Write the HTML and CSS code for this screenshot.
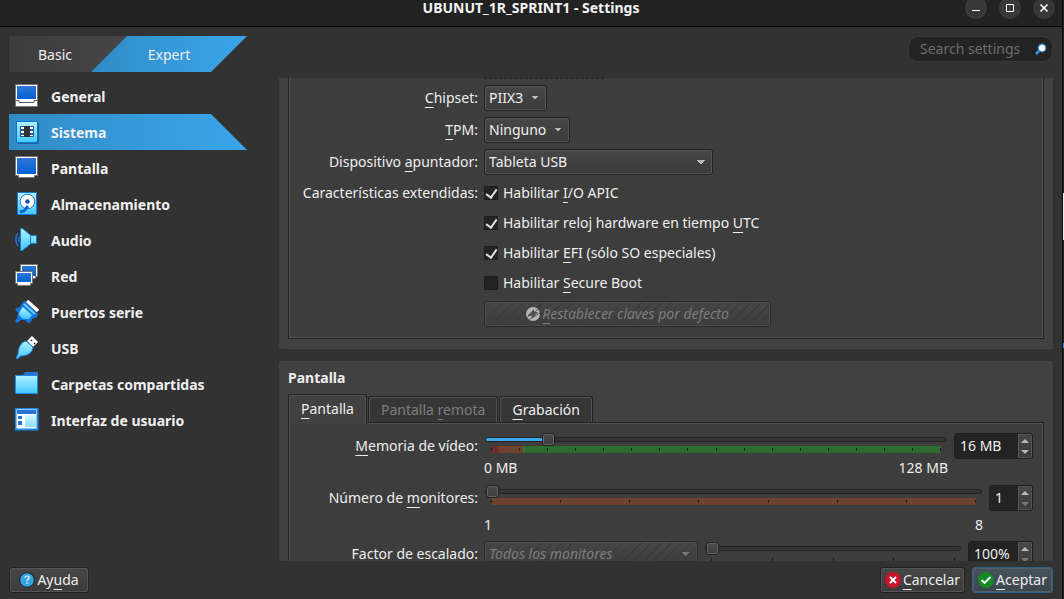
FILE: index.html
```html
<!DOCTYPE html>
<html lang="es">
<head>
<meta charset="utf-8">
<meta name="viewport" content="width=device-width, initial-scale=1">
<title>UBUNUT_1R_SPRINT1 - Settings</title>
<link rel="stylesheet" href="styles.css">
</head>
<body>
<div class="window">
  <header class="titlebar">
    <h1 class="title">UBUNUT_1R_SPRINT1 - Settings</h1>
    <div class="controls">
      <button class="control" aria-label="Minimizar"><svg width="22" height="22"><path d="M7 13.5h8" stroke="#fff" fill="none"/></svg></button>
      <button class="control" aria-label="Maximizar"><svg width="22" height="22"><path d="M7.500 7.500h7v7h-7z" stroke="#fff" fill="none"/></svg></button>
      <button class="control" aria-label="Cerrar"><svg width="22" height="22"><path d="M7.500 7.500l7 7m0-7l-7 7" stroke="#fff" stroke-width="1.500" fill="none"/></svg></button>
    </div>
  </header>

  <div class="toolbar">
    <div class="mode">
      <button class="mode-basic">Basic</button>
      <button class="mode-expert">Expert</button>
    </div>
    <label class="search">
      <input type="text" placeholder="Search settings" aria-label="Search settings">
      <svg width="12" height="12" viewBox="0 0 12 12"><path d="M1 11l3-3" stroke="#2f9be8" stroke-width="2.500"/><circle cx="7" cy="5" r="3.800" fill="#fff" stroke="#2f86e0" stroke-width="1.200"/></svg>
    </label>
  </div>

  <svg width="0" height="0" class="defs" aria-hidden="true">
    <defs>
      <linearGradient id="screen" x2="0" y2="1"><stop offset="0" stop-color="#2f76d8"/><stop offset="1" stop-color="#0061d5"/></linearGradient>
      <linearGradient id="cyan" x2="0" y2="1"><stop offset="0" stop-color="#b4f1ff"/><stop offset="1" stop-color="#3fc8ff"/></linearGradient>
    </defs>
  </svg>

  <div class="content">
    <nav class="nav">
      <button class="nav-item"><svg width="24" height="24"><path d="M.5.5h22v22H.5z" fill="#fff" stroke="#777"/><path d="M2 2h19v13H2z" fill="url(#screen)"/><path d="M1 16.500h3v2h15v-2h3" fill="none" stroke="#555"/></svg><span>General</span></button>
      <button class="nav-item selected"><svg width="24" height="24"><path d="M3 23.500h20.500V3" fill="none" stroke="#1e5f94"/><path d="M1.500 1.500h21v21h-21z" fill="url(#cyan)" stroke="#0a75d8"/><path d="M5 6h14v11H5z" fill="#2a5d8c"/><path d="M6 7h3v2H6zm0 4h3v2H6zm0 4h3v1H6zm9-8h3v2h-3zm0 4h3v2h-3zm0 4h3v1h-3z" fill="#fff"/><path d="M9 6h6v11H9z" fill="#333"/></svg><span>Sistema</span></button>
      <button class="nav-item"><svg width="24" height="24"><path d="M.5.5h22v19h-3v2h-16v-2h-3z" fill="#fff" stroke="#777"/><path d="M2 2h19v16H2z" fill="url(#screen)"/></svg><span>Pantalla</span></button>
      <button class="nav-item"><svg width="24" height="24"><path d="M2.500.5h19v22h-19z" fill="url(#cyan)" stroke="#1576df"/><circle cx="12.500" cy="9.500" r="7.300" fill="#fff" stroke="#1576df"/><circle cx="12.500" cy="9.500" r="2.200" fill="#0a55b5"/><path d="M5 20l4-1 4-5" fill="none" stroke="#0a67cf" stroke-width="3"/></svg><span>Almacenamiento</span></button>
      <button class="nav-item"><svg width="24" height="24"><path d="M5.500.5h2L16 7.500h5.500v8H16l-8.500 7h-2z" fill="url(#cyan)" stroke="#1576df"/><path d="M15.500 8v7" stroke="#1576df"/><path d="M4.500 9q-2 3 0 5M3 5q-4.500 6 0 13" fill="none" stroke="#1576df" stroke-width="1.400"/></svg><span>Audio</span></button>
      <button class="nav-item"><svg width="24" height="24"><path d="M5.500.5h17v12h-2v2h-13v-2h-2z" fill="#fff" stroke="#777"/><path d="M7 2h14v10H7z" fill="url(#screen)"/><path d="M.5 7.500h17v12h-2v2h-13v-2h-2z" fill="#fff" stroke="#777"/><path d="M2 9h14v9H2z" fill="url(#screen)"/></svg><span>Red</span></button>
      <button class="nav-item"><svg width="24" height="24"><path d="M12 1l11 10" stroke="#fff" stroke-width="3.500"/><path d="M8 2L5 7 0 9l3 4-1 5-2 3 2 2 4-3 4 0 3 3 3-1 1-3 5-2 1-3L10 1z" fill="#1576df"/><path d="M8 7l9 8-3 4-6 0-4-4 1-4z" fill="url(#cyan)"/><path d="M9 4l11 10" stroke="#65cfff" stroke-width="2"/></svg><span>Puertos serie</span></button>
      <button class="nav-item"><svg width="24" height="24"><path d="M12 5l5-5 6 6-5 5z" fill="#fff" stroke="#aaa" stroke-width=".6"/><path d="M16 4h1v1h-1zm3 3h1v1h-1z" stroke="#333" stroke-width=".6"/><path d="M11 5l7 6c0 5-5 9-12 9l-4 3-1-1 2-4C3 12 6 6 11 5z" fill="url(#cyan)" stroke="#1576df"/></svg><span>USB</span></button>
      <button class="nav-item"><svg width="24" height="24"><path d="M0 3h8l2-3h13v6H0z" fill="#2673d3"/><path d="M.5 3.500h22v18H.5z" fill="url(#cyan)" stroke="#1c8ae2"/></svg><span>Carpetas compartidas</span></button>
      <button class="nav-item"><svg width="24" height="24"><path d="M.5.500h22v21H.5z" fill="#fff" stroke="#1b89e6" stroke-width="2"/><path d="M2 2h19v4H2z" fill="#2673d3"/><path d="M3 8h4v3H3zm0 5h4v4H3z" fill="#2673d3"/><path d="M10 7h11v12H10z" fill="url(#cyan)" opacity=".6"/></svg><span>Interfaz de usuario</span></button>
    </nav>

    <main class="pages">
      <section class="card card-system">
        <div class="pane pane-system">
          <div class="cut-row"></div>
          <div class="form">
            <label for="chipset"><u>C</u>hipset:</label>
            <div><select id="chipset" class="combo combo-s"><option>PIIX3</option></select></div>
            <label for="tpm"><u>T</u>PM:</label>
            <div><select id="tpm" class="combo combo-m"><option>Ninguno</option></select></div>
            <label for="pointer">Dispositivo <u>a</u>puntador:</label>
            <div><select id="pointer" class="combo combo-l"><option>Tableta USB</option></select></div>
            <span class="form-label">Características extendidas:</span>
            <label class="check"><input type="checkbox" checked><span>Habilitar <u>I</u>/O APIC</span></label>
            <label class="check"><input type="checkbox" checked><span>Habilitar reloj hardware en tiempo <u>U</u>TC</span></label>
            <label class="check"><input type="checkbox" checked><span>Habilitar <u>E</u>FI (sólo SO especiales)</span></label>
            <label class="check"><input type="checkbox"><span>Habilitar <u>S</u>ecure Boot</span></label>
            <button class="btn reset hatched" disabled><svg width="14" height="14"><circle cx="7" cy="7" r="7" fill="#b5b5b5"/><path d="M2 8l6-6v3h4L6 12V9H2z" fill="#555"/><path d="M0 11L14 1M2 13L14 6" stroke="#444" stroke-width=".8"/></svg><span><u>R</u>establecer claves por defecto</span></button>
          </div>
        </div>
      </section>

      <section class="card card-display">
        <h2 class="card-title">Pantalla</h2>
        <div class="tabs">
          <button class="tab active"><span><u>P</u>antalla</span></button>
          <button class="tab" disabled><span>Pantalla <u>r</u>emota</span></button>
          <button class="tab"><span><u>G</u>rabación</span></button>
        </div>
        <div class="pane pane-display">
          <div class="line line-video">
            <label for="vram"><u>M</u>emoria de vídeo:</label>
            <div class="slider">
              <input id="vram" type="range" min="0" max="128" value="16" class="range range-video">
              <div class="scale scale-video"><i></i><i></i><i></i><i></i><i></i><i></i><i></i><i></i><i></i><i></i><i></i><i></i><i></i><i></i><i></i><i></i><i></i></div>
              <div class="ends"><span>0 MB</span><span>128 MB</span></div>
            </div>
            <div class="spin spin-l"><input type="text" value="16 MB" aria-label="Memoria de vídeo"><div class="steps"><button aria-label="Más"></button><button aria-label="Menos"></button></div></div>
          </div>
          <div class="line">
            <label for="monitors">Número de <u>m</u>onitores:</label>
            <div class="slider slider-low">
              <input id="monitors" type="range" min="1" max="8" value="1" class="range">
              <div class="scale scale-monitors"><i></i><i></i><i></i><i></i><i></i><i></i><i></i><i></i></div>
              <div class="ends"><span>1</span><span>8</span></div>
            </div>
            <div class="spin spin-s"><input type="text" value="1" aria-label="Número de monitores"><div class="steps"><button aria-label="Más"></button><button aria-label="Menos" disabled></button></div></div>
          </div>
          <div class="line">
            <label for="factor">Factor de escalado:</label>
            <select class="combo combo-factor hatched" disabled aria-label="Monitor"><option>Todos los monitores</option></select>
            <div class="slider slider-factor">
              <input id="factor" type="range" min="100" max="200" value="100" class="range">
              <div class="scale scale-plain"><i></i><i></i><i></i><i></i><i></i></div>
            </div>
            <div class="spin spin-m"><input type="text" value="100%" aria-label="Factor de escalado"><div class="steps"><button aria-label="Más"></button><button aria-label="Menos" disabled></button></div></div>
          </div>
        </div>
      </section>
    </main>
  </div>

  <footer class="footer">
    <button class="btn help"><svg width="16" height="16"><circle cx="8" cy="8" r="7.300" fill="#35a3e8" stroke="#222"/><path d="M5.800 6q.4-2 2.300-2 2 0 2 1.800 0 1-1.200 1.800-.8.600-.8 1.600M8.100 10.600v1.500" fill="none" stroke="#fff" stroke-width="1.200"/></svg><span>Ay<u>u</u>da</span></button>
    <button class="btn cancel"><svg width="16" height="16"><circle cx="8" cy="8" r="8" fill="#c9152c"/><path d="M5 5l6 6m0-6l-6 6" stroke="#fff" stroke-width="2"/></svg><span><u>C</u>ancelar</span></button>
    <button class="btn accept"><svg width="16" height="16"><circle cx="8" cy="8" r="8" fill="#138a26"/><path d="M3.500 8l3 3 6-6" fill="none" stroke="#fff" stroke-width="1.800"/></svg><span><u>A</u>ceptar</span></button>
  </footer>
</div>
<div class="desktop-edge"></div>
</body>
</html>
```

FILE: styles.css
```css
* { box-sizing: border-box; }

body {
  margin: 0;
  height: 100vh;
  display: flex;
  overflow: hidden;
  background: #323232;
  color: #eee;
  font: 14px/20px "Noto Sans", "Open Sans", sans-serif;
}

button, input, select {
  margin: 0;
  padding: 0;
  border: 0;
  background: none;
  color: inherit;
  font: inherit;
}

svg { flex: none; display: block; }
u { text-underline-offset: 4px; text-decoration-thickness: 1px; text-decoration-skip-ink: none; }
.defs { position: absolute; }

.window {
  flex: 1;
  min-width: 0;
  display: flex;
  flex-direction: column;
  border-right: 1px solid #0c0c0c;
}

.desktop-edge {
  width: 1px;
  background: linear-gradient(#222 0 193px, #eee 193px 240px, #222 240px 343px, #2f8fe0 343px 348px, #222 348px);
}

/* Title bar */
.titlebar {
  height: 27px;
  padding: 0 7px 10px;
  display: grid;
  grid-template-columns: 1fr auto 1fr;
  align-items: center;
  background: #222;
  border-bottom: 1px solid #050505;
}
.title { grid-column: 2; margin: 0; font-size: 14px; line-height: 16px; font-weight: 700; color: #f4f4f4; }
.controls { display: flex; justify-content: flex-end; align-items: center; gap: 12px; height: 16px; }
.control { width: 22px; height: 22px; border-radius: 50%; background: #383838; }

/* Toolbar */
.toolbar {
  display: flex;
  justify-content: space-between;
  padding: 9px 9px 6px;
}
.mode { display: flex; width: 238px; }
.mode button { height: 36px; padding-top: 2px; }
.mode .mode-basic {
  width: 118px;
  padding-right: 26px;
  background: linear-gradient(90deg, #3c3c3c, #464646);
  clip-path: polygon(0 0, 100% 0, calc(100% - 36px) 100%, 0 100%);
}
.mode .mode-expert {
  width: 156px;
  margin-left: -36px;
  background: linear-gradient(90deg, #308cc6, #3aa5ea);
  clip-path: polygon(36px 0, 100% 0, calc(100% - 36px) 100%, 0 100%);
}
.search {
  display: flex;
  align-items: center;
  width: 145px;
  height: 26px;
  padding: 0 5px 0 11px;
  border: 1px solid #3a3a3a;
  border-radius: 10px;
  background: #232323;
}
.search input { flex: 1; min-width: 0; outline: 0; }
.search input::placeholder { color: #6c6c6c; opacity: 1; }

/* Content */
.content { flex: 1; min-height: 0; display: flex; gap: 32px; padding: 0 9px; }
.nav { width: 238px; flex: none; }
.nav-item {
  display: flex;
  align-items: center;
  gap: 12px;
  width: 100%;
  height: 36px;
  padding-left: 6px;
  font-weight: 700;
  color: #f0f0f0;
}
.nav-item span { padding-top: 2px; }
.nav-item.selected {
  background: linear-gradient(90deg, #308cc6, #3aa5ea);
  clip-path: polygon(0 0, calc(100% - 36px) 0, 100% 100%, 0 100%);
}

.pages { flex: 1; min-width: 0; overflow: hidden; display: flex; flex-direction: column; gap: 12px; }
.card { flex: none; padding: 0 9px; background: #414141; }
.card-system { border-radius: 0 0 4px 4px; border-bottom: 1px solid #464646; padding-bottom: 9px; }
.card-display { border-radius: 4px 4px 0 0; border-top: 1px solid #464646; }
.card-title { margin: 0; padding: 6px 0; font-size: 14px; line-height: 20px; font-weight: 700; }

.pane { background: #3d3d3d; border: 1px solid #222; box-shadow: inset 0 0 0 1px #525252; }
.pane-system {
  border-top: 0;
  padding: 0 9px 11px;
  box-shadow: inset 1px 0 #525252, inset -1px 0 #525252, inset 0 -1px #525252;
}
.cut-row { width: 120px; margin: 0 0 6px 186px; border-top: 1px dashed #222; }

.form { display: grid; grid-template-columns: 180px 1fr; gap: 6px; }
.form > label:not(.check), .form-label { line-height: 26px; text-align: right; white-space: nowrap; }
.form > .form-label { line-height: 24px; }
.form > div { display: flex; }

.combo {
  appearance: none;
  height: 26px;
  padding: 0 22px 0 4px;
  border: 1px solid #222;
  border-radius: 3px;
  box-shadow: inset 0 0 0 1px #555;
  background:
    linear-gradient(to top right, transparent 50%, #b8b8b8 50%) right 11px center / 4px 4px no-repeat,
    linear-gradient(to top left, transparent 50%, #b8b8b8 50%) right 7px center / 4px 4px no-repeat,
    linear-gradient(#474747, #3b3b3b);
}
.combo-s { width: 63px; }
.combo-m { width: 86px; }
.combo-l { width: 229px; }
.combo-factor { width: 214px; margin-right: 6px; }

.check { grid-column: 2; display: flex; align-items: center; gap: 5px; height: 24px; }
.check input {
  appearance: none;
  width: 14px;
  height: 14px;
  border: 1px solid #1d1d1d;
  background: #232323;
  display: grid;
  place-items: center;
}
.check input:checked::before {
  content: "";
  width: 5px;
  height: 9px;
  margin-bottom: 2px;
  border: solid #e0e0e0;
  border-width: 0 2px 2px 0;
  transform: rotate(35deg);
}

.btn {
  display: flex;
  align-items: center;
  justify-content: center;
  gap: 2px;
  height: 26px;
  border: 1px solid #222;
  border-radius: 3px;
  box-shadow: inset 0 0 0 1px #555;
  background: linear-gradient(#474747, #3b3b3b);
}
.reset { grid-column: 2; width: 287px; }
.hatched {
  color: #7d7d7d;
  font-style: italic;
  opacity: 1;
  border-color: #2a2a2a;
  box-shadow: inset 0 0 0 1px #4c4c4c;
}
.btn.hatched {
  background: repeating-linear-gradient(135deg, transparent 0 6px, #3a3a3a 6px 7px), linear-gradient(#464646, #3d3d3d);
}
.combo.hatched {
  background:
    linear-gradient(to top right, transparent 50%, #777 50%) right 11px center / 4px 4px no-repeat,
    linear-gradient(to top left, transparent 50%, #777 50%) right 7px center / 4px 4px no-repeat,
    repeating-linear-gradient(135deg, transparent 0 6px, #3a3a3a 6px 7px),
    linear-gradient(#464646, #3d3d3d);
}

/* Tabs */
.tabs { display: flex; align-items: flex-end; gap: 1px; position: relative; z-index: 1; margin-bottom: -2px; }
.tab {
  height: 26px;
  margin-bottom: 2px;
  padding: 0 12px;
  border: 1px solid #222;
  border-bottom: 0;
  border-radius: 3px 3px 0 0;
  box-shadow: inset 1px 1px #525252, inset -1px 0 #525252;
  background: #363636;
}
.tab.active { height: 30px; margin-bottom: 0; padding-bottom: 2px; background: #414141; }
.tab:disabled { color: #7d7d7d; }

/* Display pane */
.pane-display { padding: 10px 10px 0 9px; display: grid; gap: 6px; }
.line { display: flex; align-items: flex-start; }
.line-video { min-height: 46px; }
.line > label { flex: none; width: 180px; margin-right: 6px; line-height: 26px; text-align: right; white-space: nowrap; }
.slider { flex: 1; min-width: 0; margin-right: 6px; }
.range {
  appearance: none;
  display: block;
  width: calc(100% - 2px);
  height: 13px;
  margin: 0 1px;
}
.range::-webkit-slider-runnable-track {
  height: 5px;
  border: 1px solid #222;
  border-radius: 3px;
  background: #343434;
}
.range-video::-webkit-slider-runnable-track {
  background: linear-gradient(90deg, #3fa9ee 0 12.5%, #343434 12.5%);
}
.range::-webkit-slider-thumb {
  appearance: none;
  width: 13px;
  height: 13px;
  margin-top: -5px;
  border: 1px solid #222;
  border-radius: 3px;
  box-shadow: inset 0 0 0 1px #636363;
  background: linear-gradient(#4b4b4b, #3e3e3e);
}
.scale { display: flex; justify-content: space-between; align-items: center; height: 7px; margin: 0 7px; }
.scale i { width: 1px; height: 3px; background: #1d1d1d; }
.scale-video { background: linear-gradient(90deg, #6b2d2d 0 7px, #8c1f1c 7px 8px, #6e432e 8px 32px, #5c6b20 32px 33px, #2e6b2f 33px); }
.scale-monitors { background: #6e432e; }
.scale-plain { margin-top: 1px; }
.ends { display: flex; justify-content: space-between; margin-top: 5px; }
.slider-low .ends { margin-top: 10px; }
.slider-factor { padding-top: 1px; }

.spin {
  flex: none;
  display: flex;
  height: 26px;
  border: 1px solid #1f1f1f;
  border-radius: 3px;
  background: #232323;
  overflow: hidden;
}
.spin-s { width: 44px; }
.spin-m { width: 65px; }
.spin-l { width: 79px; }
.spin input { flex: 1; min-width: 0; padding-left: 5px; outline: 0; }
.steps { width: 14px; display: grid; grid-template-rows: 1fr 1fr; border: 1px solid #555; background: linear-gradient(#474747, #3b3b3b); }
.steps button { display: grid; place-items: center; }
.steps button::before { content: ""; border: 4px solid transparent; border-top: 0; border-bottom-color: #b8b8b8; }
.steps button:last-child::before { border-bottom: 0; border-top: 4px solid #b8b8b8; }
.steps button:last-child:disabled::before { border-top-color: #777; }

/* Footer */
.footer { display: flex; gap: 7px; padding: 6px 9px; }
.help { width: 80px; margin-right: auto; }
.cancel { width: 85px; }
.accept { width: 81px; border-color: #24648c; box-shadow: inset 0 0 0 1px #50606b; background: linear-gradient(#47525a, #3c464d); }
```
